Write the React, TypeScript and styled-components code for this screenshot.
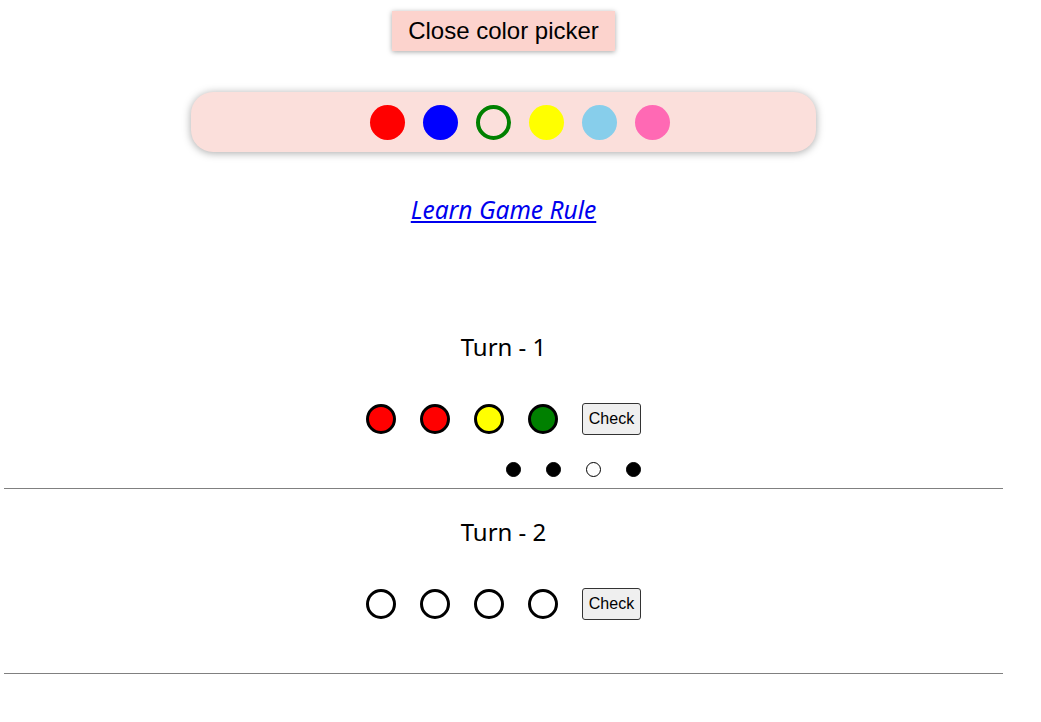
import React from 'react';
import styled, { createGlobalStyle } from 'styled-components';

const GlobalStyle = createGlobalStyle`
    body {
        margin: 0;
        background: #ffffff;
        font-family: "Noto Sans", "Liberation Sans", sans-serif;
        color: #000;
    }
`;

const Page = styled.div`
    width: 999px;
    margin-left: 4px;
    display: flex;
    flex-direction: column;
    align-items: stretch;
`;

const Top = styled.div`
    display: flex;
    flex-direction: column;
    align-items: center;
    padding-top: 11px;
`;

const PickerButton = styled.button`
    height: 40px;
    padding: 0 16px;
    border: none;
    background: #fcd3cd;
    box-shadow: 0 1px 5px rgba(0, 0, 0, 0.35);
    font-family: "Liberation Sans", Arial, sans-serif;
    font-size: 24px;
    color: #000;
    cursor: pointer;
`;

const Palette = styled.div`
    margin-top: 41px;
    width: 625px;
    height: 60px;
    box-sizing: border-box;
    padding-left: 33px;
    border-radius: 22px;
    background: #fbdfdb;
    box-shadow: 0 1px 9px rgba(0, 0, 0, 0.35);
    display: flex;
    align-items: center;
    justify-content: center;
    gap: 18px;
`;

const Swatch = styled.div<{ $color: string; $selected?: boolean }>`
    width: 35px;
    height: 35px;
    box-sizing: border-box;
    border-radius: 50%;
    background: ${p => (p.$selected ? 'transparent' : p.$color)};
    border: ${p => (p.$selected ? `4px solid ${p.$color}` : 'none')};
`;

const RuleLink = styled.a`
    margin-top: 43px;
    font-family: "Noto Sans", sans-serif;
    font-style: italic;
    font-size: 24.5px;
    line-height: 30px;
    color: #0000ee;
    text-decoration: underline;
`;

const Turns = styled.div`
    margin-top: 79px;
    display: flex;
    flex-direction: column;
`;

const TurnSection = styled.section`
    padding: 29px 0 11px;
    border-bottom: 1px solid #808080;
    display: flex;
    flex-direction: column;
    align-items: center;
`;

const TurnTitle = styled.h2`
    margin: 0;
    height: 28px;
    line-height: 28px;
    font-family: "Noto Sans", sans-serif;
    font-weight: 400;
    font-size: 24px;
`;

const Board = styled.div`
    margin-top: 42px;
    display: flex;
    flex-direction: column;
    align-items: flex-end;
    gap: 27px;
`;

const GuessRow = styled.div`
    display: flex;
    align-items: center;
    gap: 24px;
    height: 32px;
`;

const Peg = styled.div<{ $color?: string }>`
    width: 30px;
    height: 30px;
    box-sizing: border-box;
    border-radius: 50%;
    border: 3px solid #000;
    background: ${p => p.$color || '#fff'};
`;

const CheckButton = styled.button`
    width: 59px;
    height: 32px;
    padding: 0;
    border: 1px solid #333;
    border-radius: 3px;
    background: #efefef;
    font-family: "Liberation Sans", Arial, sans-serif;
    font-size: 16px;
    color: #000;
`;

const Feedback = styled.div`
    display: flex;
    gap: 25px;
    height: 15px;
`;

const Dot = styled.div<{ $filled: boolean }>`
    width: 15px;
    height: 15px;
    box-sizing: border-box;
    border-radius: 50%;
    background: ${p => (p.$filled ? '#000' : '#fff')};
    border: 1px solid #000;
`;

const paletteColors = ['red', 'blue', 'green', 'yellow', 'skyblue', 'hotpink'];

const turns: { guess: (string | undefined)[]; hints: boolean[] }[] = [
    { guess: ['red', 'red', 'yellow', 'green'], hints: [true, true, false, true] },
    { guess: [undefined, undefined, undefined, undefined], hints: [] },
];

export default function App() {
    return (
        <>
            <GlobalStyle />
            <Page>
                <Top>
                    <PickerButton>Close color picker</PickerButton>
                    <Palette>
                        {paletteColors.map(c => (
                            <Swatch key={c} $color={c} $selected={c === 'green'} />
                        ))}
                    </Palette>
                    <RuleLink href="#">Learn Game Rule</RuleLink>
                </Top>
                <Turns>
                    {turns.map((t, i) => (
                        <TurnSection key={i}>
                            <TurnTitle>Turn - {i + 1}</TurnTitle>
                            <Board>
                                <GuessRow>
                                    {t.guess.map((g, j) => (
                                        <Peg key={j} $color={g} />
                                    ))}
                                    <CheckButton>Check</CheckButton>
                                </GuessRow>
                                <Feedback>
                                    {t.hints.map((h, j) => (
                                        <Dot key={j} $filled={h} />
                                    ))}
                                </Feedback>
                            </Board>
                        </TurnSection>
                    ))}
                </Turns>
            </Page>
        </>
    );
}
